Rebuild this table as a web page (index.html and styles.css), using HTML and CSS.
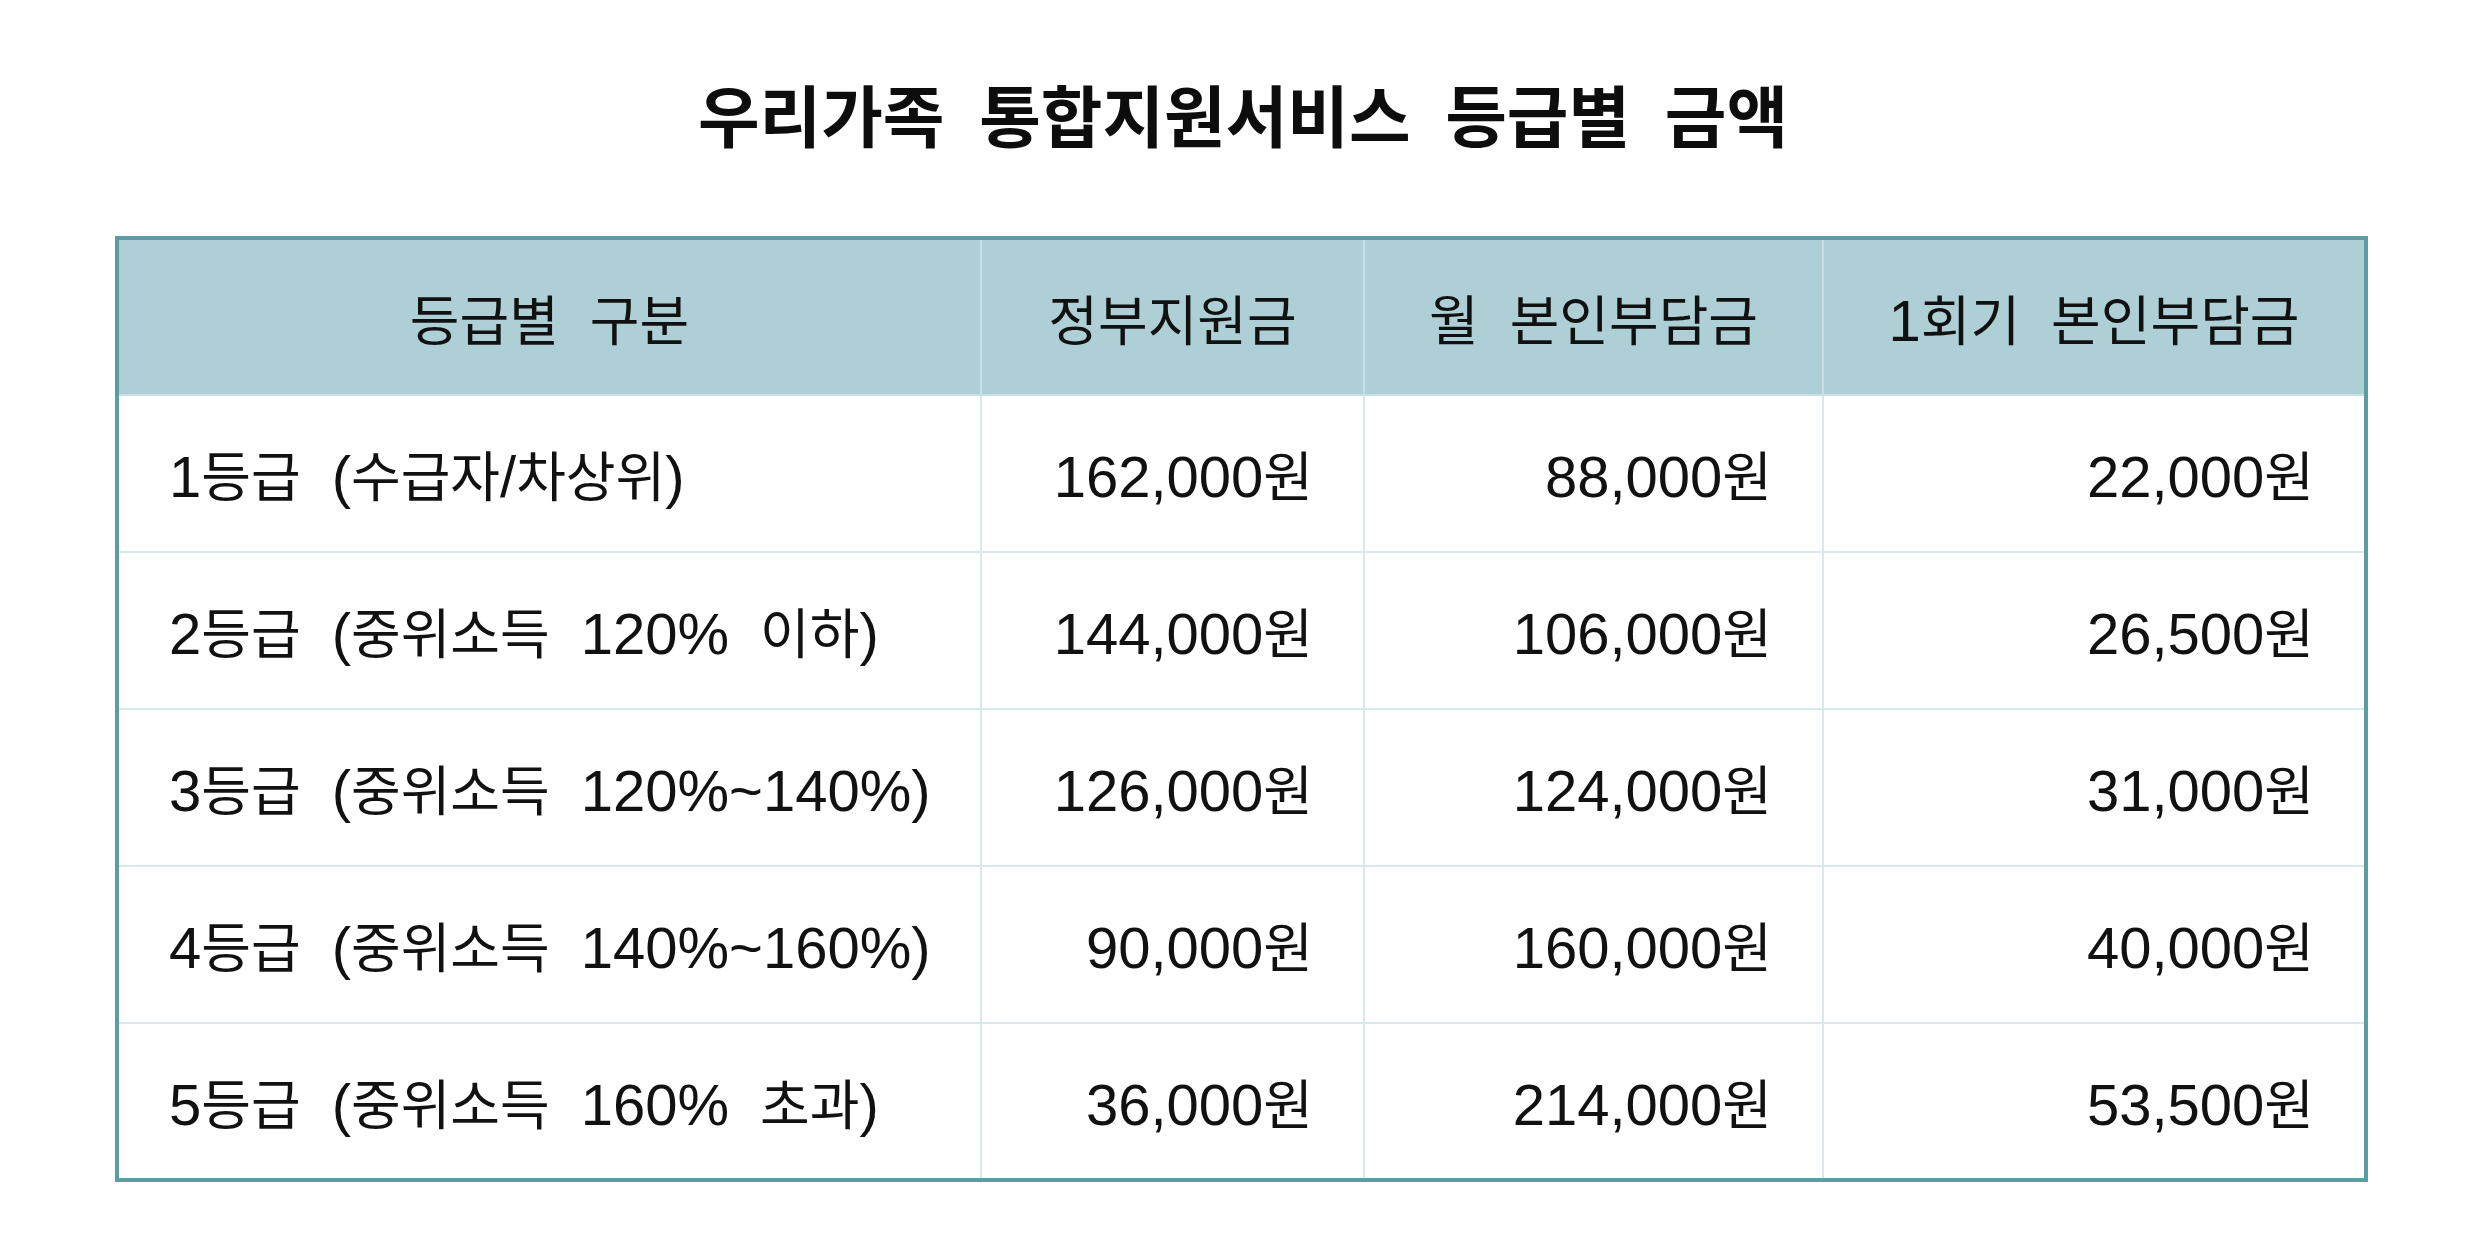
FILE: index.html
```html
<!DOCTYPE html>
<html lang="ko">
<head>
<meta charset="utf-8">
<title>우리가족 통합지원서비스 등급별 금액</title>
<link rel="stylesheet" href="styles.css">
</head>
<body>
<main class="page">
  <h1 class="title">우리가족 통합지원서비스 등급별 금액</h1>
  <table class="grade-table">
    <colgroup>
      <col class="c1"><col class="c2"><col class="c3"><col class="c4">
    </colgroup>
    <thead>
      <tr>
        <th>등급별 구분</th>
        <th>정부지원금</th>
        <th>월 본인부담금</th>
        <th><span class="n">1</span>회기 본인부담금</th>
      </tr>
    </thead>
    <tbody>
      <tr><td class="label"><span class="n">1</span>등급 <span class="n">(</span>수급자<span class="n">/</span>차상위<span class="n">)</span></td><td class="num"><span class="n">162,000</span>원</td><td class="num"><span class="n">88,000</span>원</td><td class="num"><span class="n">22,000</span>원</td></tr>
      <tr><td class="label"><span class="n">2</span>등급 <span class="n">(</span>중위소득 <span class="n">120%</span> 이하<span class="n">)</span></td><td class="num"><span class="n">144,000</span>원</td><td class="num"><span class="n">106,000</span>원</td><td class="num"><span class="n">26,500</span>원</td></tr>
      <tr><td class="label"><span class="n">3</span>등급 <span class="n">(</span>중위소득 <span class="n">120%~140%)</span></td><td class="num"><span class="n">126,000</span>원</td><td class="num"><span class="n">124,000</span>원</td><td class="num"><span class="n">31,000</span>원</td></tr>
      <tr><td class="label"><span class="n">4</span>등급 <span class="n">(</span>중위소득 <span class="n">140%~160%)</span></td><td class="num"><span class="n">90,000</span>원</td><td class="num"><span class="n">160,000</span>원</td><td class="num"><span class="n">40,000</span>원</td></tr>
      <tr><td class="label"><span class="n">5</span>등급 <span class="n">(</span>중위소득 <span class="n">160%</span> 초과<span class="n">)</span></td><td class="num"><span class="n">36,000</span>원</td><td class="num"><span class="n">214,000</span>원</td><td class="num"><span class="n">53,500</span>원</td></tr>
    </tbody>
  </table>
</main>
</body>
</html>
```

FILE: styles.css
```css
html, body {
  margin: 0;
  padding: 0;
  background: #ffffff;
}

.page {
  display: flex;
  flex-direction: column;
  align-items: center;
  padding-top: 69px;
  font-family: "Liberation Sans", "Noto Sans CJK KR", sans-serif;
  color: #111111;
}

.title {
  margin: 0 0 67px 0;
  height: 100px;
  line-height: 100px;
  font-size: 67px;
  font-weight: 700;
  color: #0d0d0d;
  word-spacing: 16px;
}

.grade-table {
  align-self: flex-start;
  margin-left: 115px;
  width: 2249px;
  border-collapse: collapse;
  table-layout: fixed;
  border: 4px solid #5c9da2;
  font-size: 54px;
}

.c1 { width: 864px; }
.c2 { width: 383px; }
.c3 { width: 459px; }
.c4 { width: 543px; }

.grade-table th,
.grade-table td {
  border: 2px solid #d9e8ea;
  padding: 0 50px;
  white-space: nowrap;
  color: #111111;
  word-spacing: 16px;
}

.n {
  font-size: 58px;
}

.grade-table thead tr {
  height: 157px;
  background: #aecfd5;
}

.grade-table th {
  font-weight: 400;
  text-align: center;
  border-color: #c9e0e3;
  border-top: 4px solid #5c9da2;
}

.grade-table tbody tr {
  height: 157px;
}

.label {
  text-align: left;
}

.num {
  text-align: right;
}
```
